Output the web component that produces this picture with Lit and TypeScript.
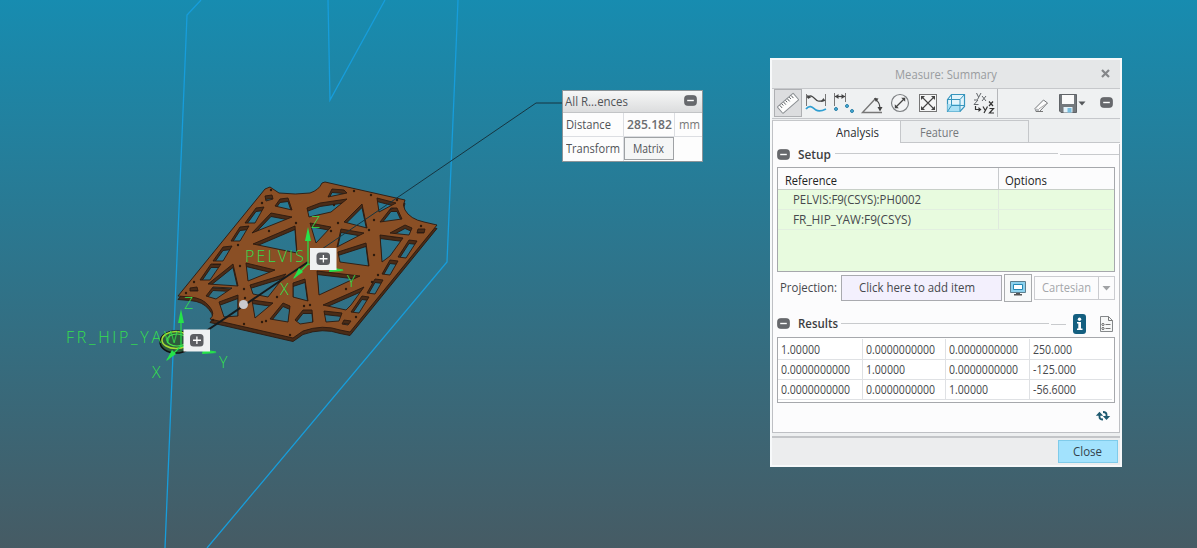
import { LitElement, html, svg, css } from "lit";
import { customElement, property } from "lit/decorators.js";

/** A single line of text condensed or widened to a given advance width. */
@customElement("fit-text")
class FitText extends LitElement {
  @property({ type: Number }) w = 50;
  static styles = css`
    :host { display: inline-block; white-space: nowrap; vertical-align: top; }
    .box { display: block; overflow: visible; }
    .run { display: inline-block; transform-origin: 0 50%; }
  `;
  render() {
    return html`<span class="box" style="width:${this.w}px"><span class="run"><slot></slot></span></span>`;
  }
  firstUpdated() {
    const run = this.renderRoot.querySelector(".run") as HTMLElement;
    const natural = run.offsetWidth;
    if (natural) run.style.transform = `scaleX(${this.w / run.getBoundingClientRect().width})`;
  }
}

const minus = svg`<rect x="0.5" y="0.5" width="12" height="10" rx="3" fill="#67696d" stroke="#55575b" stroke-width=".6"/><path d="M3.2 5.5H9.8" stroke="#fff" stroke-width="1.4"/>`;

const icons = {
  ruler: svg`<g transform="translate(14 14.3) rotate(-41)"><rect x="-10.500" y="-4.300" width="21" height="8.600" rx=".6" fill="#fdfdfd" stroke="#8c9094"/><path d="M-7.5-3.8v3.4M-5-3.8v2.4M-2.5-3.8v3.4M0-3.8v2.4M2.5-3.8v3.4M5-3.8v2.4M7.5-3.8v3.4" stroke="#55595d" stroke-width=".9"/></g>`,
  curve: svg`<path d="M4.5 5v12M23.5 5v12" stroke="#777" fill="none"/><path d="M5 8.500c5-5 8 3 11 3.500s5 0 7-1" fill="none" stroke="#444" stroke-width="1.2"/><path d="M5 6l1 4 3.500-2zM23 12l-4.500 1 3-4z" fill="#444"/><path d="M4 20c4-5 7-1 10 1s6 1 10-1" fill="none" stroke="#2f9fd2" stroke-width="1.8"/>`,
  length: svg`<path d="M4.500 4v13M15.500 4v9" stroke="#777"/><path d="M5 7.500h10" stroke="#444" stroke-width="1.200"/><path d="M5 7.500l3.500-2.500v5zM15 7.500l-3.500-2.500v5z" fill="#444"/><g fill="#4ab0dc" stroke="#2a7fa6"><circle cx="6" cy="20" r="1.500"/><circle cx="17" cy="17" r="1.500"/><circle cx="22" cy="22" r="1.500"/></g>`,
  angle: svg`<path d="M24 23.500H4.500L18 9" fill="none" stroke="#777" stroke-width="1.400"/><path d="M17.500 10.500c3.500 2 4.500 5.500 4.500 10" fill="none" stroke="#444" stroke-width="1.100"/><path d="M16 9l4.500.5-2.500 3.500zM19.500 18l2.500 4.500 2.500-4.500z" fill="#444"/>`,
  diameter: svg`<circle cx="14" cy="14" r="8.500" fill="#f3f4f5" stroke="#7d8083" stroke-width="1.200"/><path d="M10 18l8-8" stroke="#444" stroke-width="1.200"/><path d="M8.800 19.200v-4l4 4zM19.200 8.800v4l-4-4z" fill="#444"/>`,
  area: svg`<rect x="5.500" y="5.500" width="17" height="17" fill="#f5f6f6" stroke="#777"/><path d="M8 8l12 12M20 8L8 20" stroke="#444" stroke-width="1.100"/><path d="M7 7h4l-4 4zM21 7v4l-4-4zM7 21v-4l4 4zM21 21h-4l4-4z" fill="#444"/>`,
  cube: svg`<path d="M5.500 10.500l4-5h13v12l-4.500 5H5.500z" fill="#e2f4fb" stroke="#3795bd" stroke-width="1.200"/><path d="M5.500 15h12.500v7.500H5.500z" fill="#a8e0f5"/><path d="M5.500 10.500H18v12M18 10.500l4.500-5M9.500 5.500v11h13M9.500 16.500l-4 6" fill="none" stroke="#3795bd"/>`,
  transform: svg`<g fill="none" stroke="#62666a"><path d="M6.500 4l2 4M11 4L7.500 10.500M12 7l4 5M16 7l-4 5M4 11h4l-4 4.500h4.500"/></g><g fill="none" stroke="#333" stroke-width="1.200"><path d="M5.500 17v3.500H9M13 17.500l2 3.500M17.500 17.500L14 24M19 12.500l4 4.500M23 12.500l-4 4.500M19.500 19.500h4l-4 4.500h4.500"/></g><path d="M8.500 18l3 2.500-3 2.500z" fill="#333"/>`,
  eraser: svg`<path d="M8 18.500l8.500-8.500 4 3-8 8.500H9z" fill="#fcfcfc" stroke="#74777a" stroke-width="1"/><path d="M8 18.500l4 .5v2.500H9z" fill="#b9bcbf"/><path d="M12 18.800l8.500-5.800" stroke="#999" stroke-width=".8"/><path d="M9 21.500h7" stroke="#777"/>`,
  save: svg`<path d="M4.500 4.500h17v18H6l-1.500-1.500z" fill="#74797d" stroke="#606468"/><path d="M7 5h12v9H7z" fill="#fafafa"/><path d="M8.500 17h9v5.500h-9z" fill="#e5f3fa"/><path d="M12.500 18h4v4.500h-4z" fill="#79bedf"/><path d="M23.500 11.500h7l-3.500 4z" fill="#55585b"/>`,
};

const glyph = (g: unknown, w = 28, h = 28) =>
  html`<svg class="ic" width=${w} height=${h} viewBox="0 0 ${w} ${h}">${g}</svg>`;

@customElement("measure-window")
class MeasureWindow extends LitElement {
  static styles = css`
    :host { display: block; box-sizing: border-box; width: 352px; height: 409px; padding: 2px; background: #f7f9fa;
      font: 12px/16px "Open Sans", "Noto Sans", sans-serif; color: #46484c; }
    * { box-sizing: border-box; }
    svg { display: block; flex: none; }
    .win { display: flex; flex-direction: column; height: 405px; background: #edeff0; }
    .title { flex: none; height: 29px; background: #e5e7e8; border-bottom: 1px solid #c6c8cb; display: flex; align-items: center; padding: 2px 10px 0 123px; justify-content: space-between; color: #999c9f; }
    .title svg { margin-top: -3px; }
    .tools { flex: none; height: 30px; display: flex; border-bottom: 1px solid #c5c7cb; padding-left: 2px; align-items: stretch; background: #eff1f2; }
    .tool { width: 28px; height: 28px; }
    .tool.on { background: #dcdddf; outline: 1px solid #aeb0b3; outline-offset: -1px; }
    .group { display: flex; width: 224px; border-right: 1px solid #b5b7ba; height: 28px; }
    .end { display: flex; flex: 1; padding-left: 29px; align-items: center; }
    .end .min { margin-left: 14px; margin-top: -2px; }
    .tabs { flex: none; display: flex; height: 24px; margin-top: 1px; }
    .tab { width: 128px; border-top: 1px solid #c5c7ca; padding-top: 4px; }
    .tab.act { background: #fcfcfd; border-left: 1px solid #c0c2c6; padding-left: 63px; color: #2b2d30; }
    .tab.off { border-left: 1px solid #c5c7ca; border-right: 1px solid #c5c7ca; border-bottom: 1px solid #c5c7ca; padding-left: 19px; color: #75787c; width: 129px; height: 23px; }
    .rest { flex: 1; border-bottom: 1px solid #c5c7ca; height: 23px; }
    .tabs { background: linear-gradient(#edeff0 23px, #fcfcfd 23px); }
    .body { flex: none; height: 289px; background: #fcfcfd; border: 1px solid #bec0c4; border-top: 0; padding: 2px 4px 0; }
    .head { display: flex; align-items: center; height: 18px; font-weight: 600; color: #3c3e42; }
    .head fit-text { margin-left: 8px; }
    .head svg:first-child { margin-top: -1px; }
    .table { border: 1px solid #a6a8ac; width: 338px; }
    .refs { height: 105px; margin-top: 3px; background: #e8fbdf; }
    .row { display: flex; height: 20px; border-bottom: 1px solid #e2efe0; margin-right: 2px; }
    .row .a { width: 221px; padding: 2px 0 0 15px; border-right: 1px solid #dfeadd; }
    .row.h { height: 22px; background: #fcfcfd; border-bottom: 1px solid #c8cfc8; color: #222; margin-right: 0; }
    .row.h .a { padding: 5px 0 0 7px; border-right: 1px solid #c8cacd; }
    .row.h .b { padding: 5px 0 0 6px; }
    .proj { display: flex; align-items: center; height: 28px; margin-top: 2px; }
    .proj .l { padding-left: 3px; width: 64px; }
    .field { width: 161px; height: 26px; border: 1px solid #a9aaaf; background: #f3f0fd; padding: 4px 0 0 17px; }
    .mon { width: 28px; height: 28px; border: 1px solid #a9abae; margin: 0 2px; background: #f8f9f9; }
    .combo { width: 81px; height: 24px; border: 1px solid #cbccd0; display: flex; color: #a4a6aa; padding: 3px 0 0 7px; }
    .combo svg { margin: -3px 0 0 7px; border-left: 1px solid #cbccd0; }
    .res { margin-top: 13px; }
    .res svg.info { margin-left: 7px; }
    .res svg.doc { margin-left: 6px; }
    .nums { margin-top: 4px; height: 66px; background: #fff; padding: 1px 2px 0 0; }
    .nr { display: flex; height: 20px; border-bottom: 1px solid #dfe1e4; }
    .nr:first-child { height: 21px; }
    .c { width: 84px; padding: 2px 0 0 3px; border-left: 1px solid #dfe1e4; }
    .nr:first-child .c { padding-top: 3px; }
    .c:first-child { border-left: 0; }
    .ref { margin: 7px 0 0 318px; }
    .gap { flex: none; height: 3px; }
    .foot { flex: 1; border-top: 2px solid #c3c5c8; background: #ecedee; display: flex; justify-content: flex-end; align-items: flex-start; padding: 2px 2px 0 0; }
    .close { width: 60px; height: 23px; background: #a2e2fd; border: 1px solid #7fcbea; padding: 3px 0 0 14px; color: #33424c; }
  `;
  cells = [
    [["1.00000", 39], ["0.0000000000", 69], ["0.0000000000", 69], ["250.000", 39]],
    [["0.0000000000", 69], ["1.00000", 39], ["0.0000000000", 69], ["-125.000", 43]],
    [["0.0000000000", 69], ["0.0000000000", 69], ["1.00000", 39], ["-56.6000", 43]],
  ];
  render() {
    const t = Object.entries(icons);
    return html`<div class="win">
      <div class="title"><fit-text w="102">Measure: Summary</fit-text>
        <svg width="9" height="9" viewBox="0 0 9 9"><path d="M1 1l7 7M8 1L1 8" stroke="#85878a" stroke-width="2.200"/></svg></div>
      <div class="tools">
        <div class="group">${t.slice(0, 8).map(([, g], i) => html`<div class="tool ${i ? "" : "on"}">${glyph(g)}</div>`)}</div>
        <div class="end">${glyph(icons.eraser)}${glyph(icons.save, 31, 28)}<svg class="min" width="13" height="11">${minus}</svg></div>
      </div>
      <div class="tabs">
        <div class="tab act"><fit-text w="43">Analysis</fit-text></div>
        <div class="tab off"><fit-text w="39">Feature</fit-text></div>
        <div class="rest"></div>
      </div>
      <div class="body">
        <div class="head"><svg width="13" height="11">${minus}</svg><fit-text w="33">Setup</fit-text>
          <svg width="288" height="4"><path d="M4 .5H227M229 1.500H288" stroke="#c8cacd"/></svg></div>
        <div class="table refs">
          <div class="row h"><div class="a"><fit-text w="52">Reference</fit-text></div><div class="b"><fit-text w="42">Options</fit-text></div></div>
          <div class="row"><div class="a"><fit-text w="128">PELVIS:F9(CSYS):PH0002</fit-text></div></div>
          <div class="row"><div class="a"><fit-text w="118">FR_HIP_YAW:F9(CSYS)</fit-text></div></div>
        </div>
        <div class="proj"><div class="l"><fit-text w="57">Projection:</fit-text></div>
          <div class="field"><fit-text w="116">Click here to add item</fit-text></div>
          <div class="mon"><svg width="26" height="26"><path d="M5.500 6.500h15v11h-15z" fill="#8ed2ee" stroke="#5d7f8e"/><path d="M8.500 9.500h9v5h-9z" fill="#fff" stroke="#2388b5"/><path d="M11 18h4v1.500h-4zM9 19h8v1.500H9z" fill="#555"/></svg></div>
          <div class="combo"><fit-text w="49">Cartesian</fit-text><svg width="16" height="22"><path d="M3.500 9h8l-4 4.500z" fill="#a0a2a5"/></svg></div>
        </div>
        <div class="head res"><svg width="13" height="11">${minus}</svg><fit-text w="40">Results</fit-text>
          <svg width="228" height="4"><path d="M3 1.500H211M213 2.500H228" stroke="#c8cacd"/></svg>
          <svg class="info" width="13" height="20"><rect width="13" height="20" rx="3" fill="#145f80"/><circle cx="6.500" cy="5.300" r="1.700" fill="#fff"/><path d="M4 8h4v6.500h1.500V16H4v-1.500h1.300v-5H4z" fill="#fff"/></svg>
          <svg class="doc" width="21" height="18"><path d="M8.500 1.500h8l4 4v11h-12z" fill="#f6f7f7" stroke="#85888b"/><path d="M16.500 1.500v4h4M13.500 9.500h5M13.500 13.500h5" stroke="#777" fill="none"/><circle cx="11" cy="9.500" r="1.100" fill="none" stroke="#666"/><circle cx="11" cy="13.500" r="1.100" fill="none" stroke="#666"/></svg>
        </div>
        <div class="table nums">${this.cells.map((r) => html`<div class="nr">${r.map(([s, w]) => html`<div class="c"><fit-text w=${w}>${s}</fit-text></div>`)}</div>`)}</div>
        <svg class="ref" width="16" height="12"><path d="M4.500 5v2c0 1.600.8 2.500 3.500 2.500M11.500 7V4.500c0-1.600-.8-2.500-3.500-2.500" fill="none" stroke="#1f5a70" stroke-width="1.800"/><path d="M.8 5.800l3.700-4 3.700 4zM7.800 6l3.700 4 3.700-4z" fill="#1f5a70"/></svg>
      </div>
      <div class="gap"></div>
      <div class="foot"><div class="close"><fit-text w="29">Close</fit-text></div></div>
    </div>`;
  }
}

@customElement("result-tag")
class ResultTag extends LitElement {
  static styles = css`
    :host { display: block; box-sizing: border-box; width: 141px; height: 72px; border: 1px solid #8d9599; background: #fdfdfd; color: #505357;
      font: 12px/16px "Open Sans", "Noto Sans", sans-serif; }
    * { box-sizing: border-box; }
    .h { height: 22px; background: linear-gradient(#f6f7f7, #dcddde); border-bottom: 1px solid #c2c4c6; display: flex; justify-content: space-between; padding: 3px 5px 0 2px; }
    .h svg { margin-top: 1px; }
    .r { display: flex; height: 24px; border-bottom: 1px solid #dcdee2; }
    .r:last-child { border: 0; height: 24px; }
    .k { width: 61px; padding: 4px 0 0 3px; border-right: 1px solid #dcdee2; }
    .v { width: 51px; padding: 4px 0 0 3px; border-right: 1px solid #dcdee2; font-weight: 600; color: #6a6c70; }
    .u { padding: 4px 0 0 4px; color: #777; }
    .b { width: 50px; height: 23px; border: 1px solid #9fa2a5; background: #f5f6f6; padding: 3px 0 0 8px; }
  `;
  render() {
    return html`<div class="h"><fit-text w="63">All R...ences</fit-text><svg width="13" height="11">${minus}</svg></div>
      <div class="r"><div class="k"><fit-text w="45">Distance</fit-text></div><div class="v"><fit-text w="45">285.182</fit-text></div><div class="u"><fit-text w="21">mm</fit-text></div></div>
      <div class="r"><div class="k"><fit-text w="54">Transform</fit-text></div><div class="b"><fit-text w="31">Matrix</fit-text></div></div>`;
  }
}

const outline =
  "M265 189L270 187L279 193Q296 195 310 193Q319 190 322 183L325 182L405 200Q402 205 405 210Q410 219 424 222L437 225L350 332L340 330Q323 324 303 331L293 338L210 319Q216 314 209 306Q203 298 190 297L178 296Z";
const holes = [
  "M265 196L272 195L273 199L266 201Z", "M256 208L264 207L255 223L245 223Z", "M240 227L249 226L240 241L231 241Z",
  "M223 247L232 246L223 261L213 261Z", "M211 264L221 264L210 280L200 280Z", "M190 288L197 287L198 291L190 291Z",
  "M275 206L280 199L288 198L292 210Z", "M271 213L292 217L252 233Z", "M295 226L253 244L297 253Z",
  "M332 189L344 190L347 193L328 197Z", "M307 208L320 203L347 199L331 212L309 217Z", "M362 204L344 222L367 228Z",
  "M377 198L396 203L379 212Z", "M380 222L391 208L397 208L402 219Z", "M390 233L405 225L412 228L409 235Z",
  "M418 229L425 229L424 233L417 233Z", "M409 240L417 241L406 258L398 257Z", "M390 260L398 261L390 275L382 274Z",
  "M375 279L383 280L375 294L367 293Z", "M362 296L369 297L359 313L351 312Z", "M344 320L351 321L348 325L342 324Z",
  "M380 235L403 238L390 256L382 262Z", "M310 223L331 227L316 243Z", "M341 229L364 233L337 247Z",
  "M338 252L366 243L369 266L340 262Z", "M317 271L360 276L319 295Z", "M323 305L364 287L351 305L346 310Z",
  "M324 311L342 313L339 321L326 322Z", "M293 283L305 279L308 301L293 297Z", "M295 320L303 310L312 310L313 322L300 324Z",
  "M208 284L233 264L238 286Z", "M246 263L275 270L248 281Z", "M206 296L213 287L232 288L216 299Z",
  "M219 302L238 295L238 316L224 317Z", "M252 300L273 303L255 318Z", "M250 285L286 274L268 297L253 294Z",
  "M270 319L283 303L290 306L288 322Z",
].join("");
const bolts = [[271, 190], [262, 203], [296, 223], [269, 231], [238, 245], [240, 266], [244, 289], [245, 298], [244, 324], [262, 322], [290, 335], [334, 205], [338, 223], [331, 231], [354, 191], [371, 195], [369, 230], [374, 220], [374, 255], [378, 275], [372, 282], [346, 289], [310, 305], [304, 306], [397, 200], [421, 226], [356, 317], [194, 282], [186, 293], [213, 320], [277, 297], [266, 321]];

@customElement("model-view")
class ModelView extends LitElement {
  static styles = css`
    :host { display: block; }
    svg { display: block; }
    .lbl { font: 300 16px "Open Sans", sans-serif; fill: #35df4f; }
  `;
  triad(x: number, y: number) {
    return svg`<g stroke="#25e34a" fill="#25e34a"><path d="M${x} ${y}V${y - 30}M${x} ${y}l35 6M${x} ${y}l-14 14" fill="none" stroke-width="1.200"/><path stroke="none" d="M${x} ${y - 37}l3 14h-6zM${x + 36} ${y + 7}l-15 1 1-5zM${x - 15} ${y + 15}l6-11 4 4z"/></g>`;
  }
  plus(x: number, y: number) {
    return svg`<g transform="translate(${x} ${y})"><rect width="26.500" height="22" fill="#eff1f2"/><rect x="6.500" y="4.500" width="13.500" height="12.500" rx="3.500" fill="#5c5e62"/><path d="M9.500 10.750h8M13.400 7v7.500" stroke="#fff" stroke-width="1.300"/></g>`;
  }
  render() {
    return html`<svg width="1197" height="548" viewBox="0 0 1197 548">
      <g fill="none" stroke="#179ddb" stroke-width="1.300"><path d="M201 0L187 15L165 548M328 0L330 100L385 0M458 0L457 25L447 262L207 548"/></g>
      <g stroke="#2b1a10" stroke-width=".9" stroke-linejoin="round" fill-rule="evenodd">
        <path d=${outline + holes} fill="#4b2c17" transform="translate(0 3.500)"/>
        <path d=${outline + holes} fill="#8a4f25"/>
      </g>
      ${bolts.map(([x, y]) => svg`<circle cx=${x} cy=${y} r="1.200" fill="#2f1a0d"/>`)}
      <ellipse cx="176" cy="342" rx="16" ry="11" fill="#2d5a3c" stroke="#111" stroke-width="1.500"/>
      <ellipse cx="176" cy="340" rx="14" ry="8.500" fill="none" stroke="#a4dc35" stroke-width="1.500"/><ellipse cx="177" cy="340" rx="10" ry="6" fill="none" stroke="#4de04a" stroke-width="1.200"/>
      <path d="M562 103H536L322 249" fill="none" stroke="#173540" stroke-width="1"/>
      <path d="M308 262L196 338" stroke="#151a1c" stroke-width="2"/>
      <circle cx="243.500" cy="304.500" r="4.500" fill="#c9cbd0"/>
      ${this.triad(308, 264)}${this.triad(181, 346)}
      <g class="lbl">
        <text x="245" y="261.500" textLength="59" lengthAdjust="spacing">PELVIS</text>
        <text x="66" y="343" textLength="112" lengthAdjust="spacing">FR_HIP_YAW</text>
        <text x="311" y="228">Z</text><text x="347" y="287">Y</text><text x="280" y="295">X</text>
        <text x="184" y="309">Z</text><text x="219" y="368">Y</text><text x="152" y="378">X</text>
      </g>
      ${this.plus(310, 248)}${this.plus(183.500, 329.500)}
    </svg>`;
  }
}

@customElement("app-root")
class AppRoot extends LitElement {
  static styles = css`
    :host { display: block; position: relative; width: 1197px; height: 548px; overflow: hidden; background: linear-gradient(#178cb0, #465b64); }
    .tag { position: absolute; left: 562px; top: 90px; }
    .panel { position: absolute; left: 770px; top: 58px; }
  `;
  render() {
    return html`<model-view></model-view><result-tag class="tag"></result-tag><measure-window class="panel"></measure-window>`;
  }
}
